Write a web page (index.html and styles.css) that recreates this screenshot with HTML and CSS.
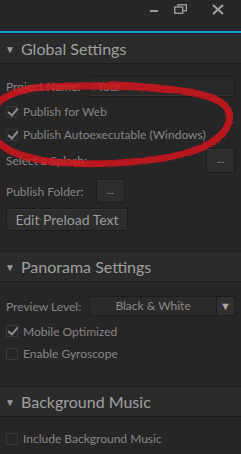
FILE: index.html
```html
<!DOCTYPE html>
<html lang="en">
<head>
	<meta charset="UTF-8">
	<title>Settings</title>
	<link rel="stylesheet" href="styles.css">
</head>
<body>
	<div class="panel">
		<div class="titlebar">
			<span class="tb-min"></span>
			<svg class="tb-restore" width="13" height="10" viewBox="0 0 13 10">
				<rect x="4" y="0.7" width="8.3" height="6" fill="none" stroke="#9a9a9a" stroke-width="1.4"/>
				<rect x="0.7" y="3" width="8" height="6.3" fill="#272727" stroke="#9a9a9a" stroke-width="1.4"/>
			</svg>
			<svg class="tb-close" width="12" height="11" viewBox="0 0 12 11">
				<path d="M1 1 L11 10 M11 1 L1 10" stroke="#a0a0a0" stroke-width="2.2"/>
			</svg>
		</div>
		<div class="accent"></div>

		<div class="sec-head"><span class="tri">&#9660;</span>Global Settings</div>
		<div class="sec-body global">
			<div class="row field">
				<label>Project Name:</label>
				<div class="input">Tour</div>
			</div>
			<div class="row check"><span class="box on"></span>Publish for Web</div>
			<div class="row check"><span class="box on"></span>Publish Autoexecutable (Windows)</div>
			<div class="row splash">
				<label>Select a Splash:</label>
				<span class="btn dots">...</span>
			</div>
			<div class="row folder">
				<label>Publish Folder:</label>
				<span class="btn dots">...</span>
			</div>
			<div class="row"><span class="btn big">Edit Preload Text</span></div>
		</div>

		<div class="sec-head"><span class="tri">&#9660;</span>Panorama Settings</div>
		<div class="sec-body pano">
			<div class="row field">
				<label>Preview Level:</label>
				<div class="select"><span class="sel-val">Black &amp; White</span><span class="sel-arrow">&#9660;</span></div>
			</div>
			<div class="row check"><span class="box on"></span>Mobile Optimized</div>
			<div class="row check"><span class="box"></span>Enable Gyroscope</div>
		</div>

		<div class="sec-head"><span class="tri">&#9660;</span>Background Music</div>
		<div class="sec-body music">
			<div class="row check"><span class="box"></span>Include Background Music</div>
		</div>

		<!-- red marker circle drawn over the publish options -->
		<svg class="scribble" width="241" height="454" viewBox="0 0 241 454">
			<defs>
				<filter id="rough" x="-10%" y="-10%" width="120%" height="120%">
					<feTurbulence type="fractalNoise" baseFrequency="0.9" numOctaves="2" result="n"/>
					<feDisplacementMap in="SourceGraphic" in2="n" scale="2.5"/>
				</filter>
			</defs>
			<path filter="url(#rough)" d="M170 90 C 140 86, 90 85, 45 87 C 15 89, -7 99, -10 119 C -12 141, 6 153, 40 160 C 80 167, 150 164, 190 152 C 222 142, 234 124, 228 110 C 222 98, 200 93, 175 90 C 150 87, 125 85, 110 85" fill="none" stroke="#d8121e" stroke-width="7" stroke-linecap="round" opacity="0.82"/>
		</svg>
	</div>
</body>
</html>
```

FILE: styles.css
```css
*{margin:0;padding:0;box-sizing:border-box;}
body{background:#262626;font-family:Lato,"Open Sans",sans-serif;font-size:12px;color:#878787;}

.panel{position:relative;width:241px;height:454px;overflow:hidden;background:#262626;}

.titlebar{height:31px;display:flex;align-items:flex-start;justify-content:flex-end;background:#272727;}
.tb-min{width:8px;height:2px;background:#9a9a9a;margin:10px 16px 0 0;}
.tb-restore{margin:4px 25px 0 0;}
.tb-close{margin:4px 17px 0 0;}
.accent{height:2px;background:#1b9fd9;}

.sec-head{height:31px;display:flex;align-items:center;padding-left:5px;background:#2b2b2b;border-top:1px solid #1f1f1f;border-bottom:1px solid #1c1c1c;font-size:16px;color:#a0a0a0;}
.sec-head .tri{font-size:10px;color:#9a9a9a;width:16px;}

.row{display:flex;align-items:center;padding:0 6px;}
label{margin-right:8px;}

.global{padding:12px 0 20px;}
.global .field{height:21px;}
.input{flex:1;height:21px;padding-left:8px;line-height:20px;background:#282828;border:1px solid #1d1d1d;box-shadow:inset 0 -1px 0 #333;color:#8a8a8a;}
.check{height:23px;}
.global .field + .check{margin-top:3px;}
.box{width:12px;height:12px;margin-right:5px;border:1px solid #393939;background:#262626;position:relative;}
.box.on::after{content:"";position:absolute;left:3px;top:-1px;width:4px;height:8px;border:solid #8a8a8a;border-width:0 2px 2px 0;transform:rotate(40deg);}

.splash{height:25px;margin-top:2px;justify-content:space-between;}
.folder{height:24px;margin-top:6px;}
.folder label{margin-right:12px;}
.btn{display:inline-flex;align-items:center;justify-content:center;background:#2d2d2d;border:1px solid #1c1c1c;border-radius:2px;box-shadow:inset 0 1px 0 #363636;color:#9a9a9a;}
.dots{width:29px;height:25px;font-size:10px;padding-bottom:3px;}
.folder .dots{height:24px;}
.big{margin-top:5px;width:122px;height:23px;font-size:14px;color:#9c9c9c;}

.pano{padding:14px 0 21px;}
.pano .field{height:20px;}
.select{flex:1;height:20px;display:flex;background:#2a2a2a;border:1px solid #1d1d1d;}
.sel-val{flex:1;text-align:center;line-height:18px;color:#8c8c8c;}
.sel-arrow{width:18px;font-size:11px;line-height:18px;text-align:center;color:#ababab;background:#303030;border-left:1px solid #1e1e1e;}
.pano .field + .check{margin-top:4px;height:22px;}
.pano .check{height:23px;}

.music{padding:10px 0 0;}

.scribble{position:absolute;left:0;top:0;pointer-events:none;}
```
